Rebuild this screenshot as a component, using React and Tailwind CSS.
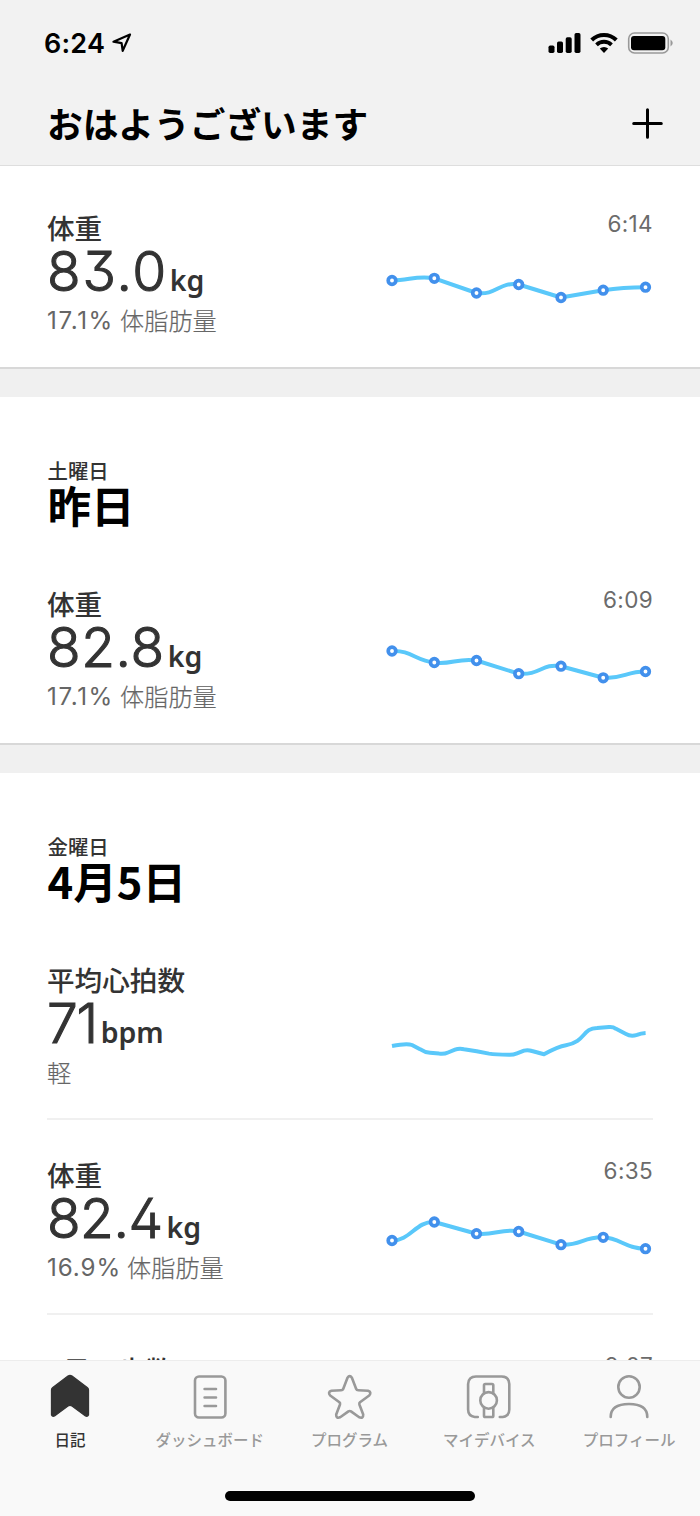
import React from "react";

const JP = "font-['Noto_Sans_CJK_JP',sans-serif]";
const LATIN = "font-['Inter','Noto_Sans_CJK_JP',sans-serif]";

const XS = [19, 61.3, 103.5, 145.7, 188, 230.2, 272.5];

function Chart({ path, ys = [] }) {
  return (
    <svg width="280" height="90" viewBox="0 0 280 90" className="block" fill="none">
      <path d={path} stroke="#5ac8fa" strokeWidth="4" strokeLinejoin="round" />
      {ys.map((y, i) => (
        <circle key={i} cx={XS[i]} cy={y} r="3.8" fill="#fff" stroke="#4290ec" strokeWidth="3.7" />
      ))}
    </svg>
  );
}

function Entry({
  label,
  value,
  unit,
  percent,
  percentClass = "w-[73px] tracking-[1.6px]",
  detail,
  time,
  path,
  ys,
  tracking = "tracking-normal",
  unitGap = "ml-1",
}) {
  return (
    <div className="flex h-[195px] w-full shrink-0 justify-between px-[47px]">
      <div className="flex flex-col pt-[39px] whitespace-nowrap">
        <div className={`h-[32px] text-[27.6px] leading-[32px] font-medium text-[#333] ${JP}`}>{label}</div>
        <div className="flex h-[50px] items-baseline text-[#333]">
          <span
            className={`font-['Inter',sans-serif] text-[55px] leading-[56px] font-light [-webkit-text-stroke:1.1px_#333] [font-feature-settings:'cv02','cv09','ss01'] ${tracking}`}
          >
            {value}
          </span>
          <span className={`font-['Noto_Sans',sans-serif] text-[28.5px] leading-[30px] font-semibold ${unitGap}`}>{unit}</span>
        </div>
        <div className="mt-[12px] flex h-[30px] text-[24.2px] leading-[30px] text-[#666]">
          {percent && <span className={`mt-px font-['Inter',sans-serif] ${percentClass}`}>{percent}</span>}
          <span className={`font-light [-webkit-text-stroke:0.2px_#666] ${JP}`}>{detail}</span>
        </div>
      </div>
      <div className="flex w-[280px] flex-col">
        <div className={`mt-[37px] h-[30px] text-right text-[22.5px] leading-[30px] tracking-[0.35px] text-[#6b6b6b] ${LATIN}`}>{time}</div>
        <div className="mt-[13px]">{path && <Chart path={path} ys={ys} />}</div>
      </div>
    </div>
  );
}

function DayHeader({ weekday, title }) {
  return (
    <div className={`flex h-[151px] shrink-0 flex-col pt-[61px] pl-[47.5px] whitespace-nowrap ${JP}`}>
      <div className="h-6 text-[20.4px] leading-6 font-medium text-[#333]">{weekday}</div>
      <div className="h-[44px] text-[43.6px] leading-[44px] font-bold text-black">{title}</div>
    </div>
  );
}

const Gap = () => <div className="h-[30px] shrink-0 border-t-2 border-[#d8d8d8] bg-[#f0f0f0]" />;
const Divider = () => <div className="mx-[47px] -mt-px -mb-px h-[2px] shrink-0 bg-[#f0f0f0]" />;

function Tab({ label, active, children }) {
  return (
    <div className={`flex w-[139.8px] shrink-0 flex-col items-center ${active ? "text-[#333]" : "text-[#999]"}`}>
      <svg width="48" height="48" viewBox="0 0 48 48" fill="none" stroke="currentColor" strokeWidth="2.6" strokeLinecap="round" strokeLinejoin="round">
        {children}
      </svg>
      <div className={`mt-[9px] h-5 text-[15.5px] leading-5 font-medium whitespace-nowrap ${JP}`}>{label}</div>
    </div>
  );
}

export default function App() {
  return (
    <div className="flex h-[1516px] w-[700px] flex-col overflow-hidden bg-white">
      <header className="h-[166px] shrink-0 border-b border-[#dedede] bg-[#f2f2f2]">
        <div className="flex h-[86px] items-center justify-between pr-[27px] pl-[44px]">
          <div className="flex items-center gap-[7px]">
            <span className="mt-[2px] font-['Inter',sans-serif] text-[27px] leading-8 font-semibold tracking-[0.2px] text-black">6:24</span>
            <svg width="20" height="20" viewBox="0 0 20 20" fill="none" stroke="#000" strokeWidth="2.2" strokeLinejoin="round">
              <path d="M18 1.5 L1.5 8.7 L9.6 10.2 L10.7 17.8 Z" />
            </svg>
          </div>
          <svg width="125" height="24" viewBox="548 31 125 24" fill="none">
            <rect x="548.5" y="45.5" width="6" height="7.5" rx="1.7" fill="#000" />
            <rect x="557" y="41.5" width="6" height="11.5" rx="1.7" fill="#000" />
            <rect x="565.7" y="37.2" width="6" height="15.8" rx="1.7" fill="#000" />
            <rect x="574.5" y="33" width="6" height="20" rx="1.7" fill="#000" />
            <path d="M591.7 40 A17.6 17.6 0 0 1 616.3 40" stroke="#000" strokeWidth="4" />
            <path d="M596.5 44.8 A10.8 10.8 0 0 1 611.5 44.8" stroke="#000" strokeWidth="3.8" />
            <path d="M604 53 L599.8 48.6 A6 6 0 0 1 608.2 48.6 Z" fill="#000" />
            <rect x="628.7" y="33" width="39.6" height="20" rx="5.8" stroke="#999" strokeWidth="1.6" />
            <rect x="631" y="36" width="34.3" height="14.2" rx="3" fill="#000" />
            <path d="M670.5 39.5 Q675 43 670.5 46.5 Z" fill="#999" />
          </svg>
        </div>
        <div className="flex h-[74px] items-center justify-between pr-[37px] pl-[47px]">
          <h1 className={`text-[35.7px] leading-[74px] font-bold whitespace-nowrap text-black ${JP}`}>おはようございます</h1>
          <svg width="31" height="31" viewBox="0 0 31 31" stroke="#000" strokeWidth="3" strokeLinecap="round">
            <path d="M15.5 1.7V29.3M1.7 15.5H29.3" />
          </svg>
        </div>
      </header>

      <main className="flex h-[1195px] shrink-0 flex-col overflow-hidden bg-white">
        <div className="h-[6px] shrink-0" />
        <Entry
          label="体重" value="83.0" unit="kg" percent="17.1%" detail="体脂肪量" time="6:14"
          tracking="tracking-[1.8px]" unitGap="ml-[1.5px]"
          ys={[28.5, 26.3, 41, 32.5, 45.5, 38.2, 35.2]}
          path="M19 28.5 C36 28.5 44 23 61.3 26.3 L103.5 41 C124 43.5 126 29.5 145.7 32.5 L188 45.5 L230.2 38.2 Q250 35.2 272.5 35.2"
        />
        <Gap />
        <DayHeader weekday="土曜日" title="昨日" />
        <Entry
          label="体重" value="82.8" unit="kg" percent="17.1%" detail="体脂肪量" time="6:09"
          tracking="tracking-[0.6px]" unitGap="ml-[3px]"
          ys={[23, 34.5, 32.5, 45.7, 38.2, 49.8, 43.5]}
          path="M19 23 C38 22 43 33 61.3 34.5 C77 37 86 29.5 103.5 32.5 L145.7 45.7 C167 47.5 169 35 188 38.2 L230.2 49.8 C250 51 253 43.5 272.5 43.5"
        />
        <Gap />
        <DayHeader weekday="金曜日" title="4月5日" />
        <Entry
          label="平均心拍数" value="71" unit="bpm" detail="軽" time=""
          tracking="tracking-[-1.4px]" unitGap="ml-[4px]"
          path="M19 42 Q34 39 39 41 L47 45.2 Q52 48.6 57 48.8 L66 49.6 Q71 50.4 75 48.5 L82 45.7 Q86 44.2 91 45.2 L103.7 47.2 L116 49.6 Q122 50.6 136 50.8 Q140 51 144 49.3 L151 46.6 Q155 45.6 159 47 L171 50.2 Q185 42.5 193 41.2 C213 37.5 209 24.3 224 24 L236 23 Q240 22.6 243 24.8 L253 30 Q258 32.8 264 30.8 Q268 29.2 272.6 28.9"
        />
        <Divider />
        <Entry
          label="体重" value="82.4" unit="kg" percent="16.9%" detail="体脂肪量" time="6:35"
          percentClass="w-[80px] tracking-[0.9px]"
          tracking="tracking-[-0.5px]" unitGap="ml-[4px]"
          ys={[41.5, 23, 34.7, 32.5, 45.7, 38.3, 49.7]}
          path="M19 41.5 C37 42 43 22 61.3 23 L103.5 34.7 C120 37 130 29 145.7 32.5 L188 45.7 C207 47 211 37.5 230.2 38.3 C247 39 253 50 272.5 49.7"
        />
        <Divider />
        <Entry label="1日の歩数" value="" unit="" detail="" time="9:07" />
      </main>

      <footer className="flex h-[155px] shrink-0 flex-col items-center bg-[#f9f9f9] shadow-[0_-1px_0_#ededed]">
        <nav className="flex h-[126px] w-[700px] pt-[11px]">
          <Tab label="日記" active>
            <path d="M5.5 18 Q5.5 16.5 6.8 15.5 L22 4 Q24 3 26 4 L41.2 15.5 Q42.5 16.5 42.5 18 V43 Q41.5 45 39.5 44 L26 34 Q24 32.5 22 34 L8.5 44 Q6.5 45 5.5 43 Z" fill="currentColor" strokeWidth="1.3" />
          </Tab>
          <Tab label="ダッシュボード">
            <rect x="9" y="4.5" width="30.4" height="41" rx="4" />
            <path d="M18.6 17H30M18.6 25.5H30M18.6 34H30" />
          </Tab>
          <Tab label="プログラム">
            <path transform="translate(0.7 0)" d="M21.8 5.8 Q24 2.5 26.2 5.8 L30.5 17 Q31 18.3 32.5 18.3 L42.3 18.8 Q46.3 20 43.5 23.5 L34.3 30.3 Q33.3 31.2 33.7 32.5 L37.5 42.5 Q37.7 46.8 33.5 45.3 L25.3 39.4 Q24 38.6 22.7 39.4 L14.5 45.3 Q10.3 46.8 10.5 42.5 L14.3 32.5 Q14.7 31.2 13.7 30.3 L4.5 23.5 Q1.7 20 5.7 18.8 L15.5 18.3 Q17 18.3 17.5 17 Z" />
          </Tab>
          <Tab label="マイデバイス">
            <path d="M12.8 45 H9.8 Q3.1 44 3.1 37.5 V12 Q3.5 4.5 11 4.5 H36.6 Q43.8 4.5 44.3 12 V37.5 Q44.3 44 37.8 45 H34.8" />
            <circle cx="23.6" cy="28.4" r="8.3" />
            <path d="M19 21 V13.3 Q19 12 20.3 12 H27 Q28.3 12 28.3 13.3 V21 M19 36 V43.7 Q19 45 20.3 45 H27 Q28.3 45 28.3 43.7 V36" />
          </Tab>
          <Tab label="プロフィール">
            <circle cx="24" cy="15" r="10.7" />
            <path d="M5.7 45 C5.7 36 13 32 24 32 S42.3 36 42.3 45" />
          </Tab>
        </nav>
        <div className="mt-[4px] h-[10px] w-[250px] rounded-full bg-black" />
      </footer>
    </div>
  );
}
